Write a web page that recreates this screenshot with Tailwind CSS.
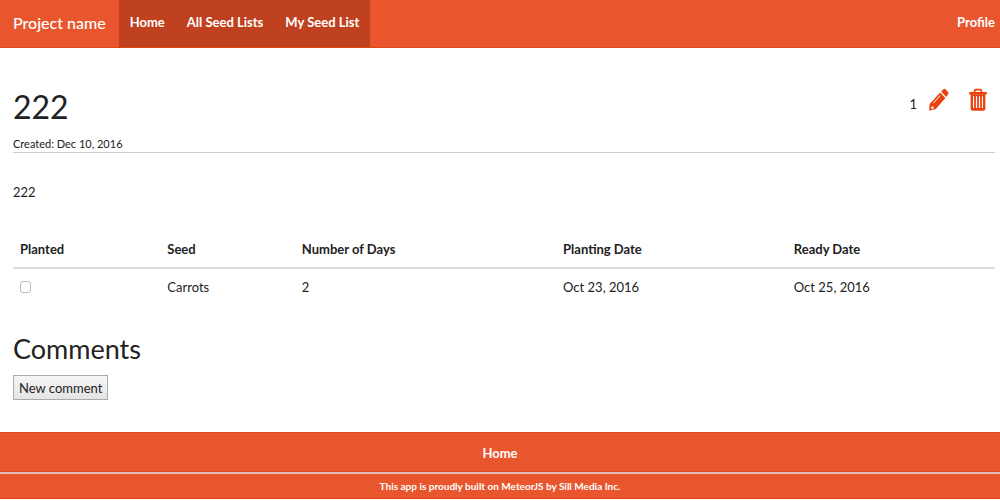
<!DOCTYPE html>
<html lang="en">
<head>
<meta charset="utf-8">
<meta name="viewport" content="width=device-width, initial-scale=1">
<title>Seed List</title>
<script src="https://cdn.jsdelivr.net/npm/@tailwindcss/browser@4"></script>
</head>
<body class="bg-white font-['Lato','Noto_Sans',sans-serif] text-[13px] text-[#222]">
<nav class="flex h-12 items-stretch justify-between border-b border-[#dd4814] bg-[#e9562d] font-bold text-white">
  <div class="flex">
    <a href="#" class="flex items-center px-[13px] pb-[2px] text-base font-medium">Project name</a>
    <div class="flex bg-[#bf4120]">
      <a href="#" class="flex items-center px-[11px] pb-[2px]">Home</a>
      <a href="#" class="flex items-center px-[11px] pb-[2px]">All Seed Lists</a>
      <a href="#" class="flex items-center px-[11px] pb-[2px]">My Seed List</a>
    </div>
  </div>
  <a href="#" class="flex items-center pb-[2px] pr-[5px]">Profile</a>
</nav>
<main class="pl-[13px] pr-[5px] pt-9">
  <header class="flex items-start justify-between border-b border-[#ccc]">
    <div>
      <h1 class="text-[32px] leading-[46px]">222</h1>
      <p class="pt-[5px] text-[11px] leading-[17px]">Created: Dec 10, 2016</p>
    </div>
    <div class="flex items-center gap-3 pr-2 pt-1 text-[#e8420f]">
      <span class="pt-2 text-[13px] leading-4 text-[#222]">1</span>
      <button type="button" aria-label="Edit" class="cursor-pointer">
        <svg class="h-6 w-5" viewBox="0 0 20 24" fill="currentColor" aria-hidden="true">
          <path d="M12.2 3.4 14.4 1.2Q15.6.4 16.8 1.4L19 4Q20 5.4 19 6.6L17.2 9Z"/>
          <path fill-rule="evenodd" d="M11.2 4.4 16.4 10.1 6.8 21.1.3 22.8.6 16ZM2.5 18.5 2.1 21.1 4.8 20.4 4.7 18.7ZM11 7.2 4 15.1 4.5 15.6 11.5 7.7Z"/>
        </svg>
      </button>
      <button type="button" aria-label="Delete" class="ml-2 cursor-pointer">
        <svg class="h-6 w-[18px]" viewBox="0 0 18 24" fill="currentColor" aria-hidden="true">
          <path fill-rule="evenodd" d="M4.8 4V2.8Q5 .8 6.7.8H11.3Q13 .8 13.2 2.8V4H17Q17.8 4 17.8 4.8V6.4H.2V4.8Q.2 4 1 4ZM6.5 4H11.5V2.4H6.5Z"/>
          <path fill-rule="evenodd" d="M1.6 6.2H16.4V20.5Q16.4 22.8 14.2 22.8H3.8Q1.6 22.8 1.6 20.5ZM4 8.3V19.9H5.1V8.3ZM6.9 8.3V19.9H8.1V8.3ZM9.9 8.3V19.9H11.1V8.3ZM12.9 8.3V19.9H14V8.3Z"/>
        </svg>
      </button>
    </div>
  </header>
  <p class="pt-[29px] leading-5">222</p>
  <table class="mt-7 w-full table-fixed text-left leading-5">
    <thead>
      <tr class="border-b-2 border-[#ddd]">
        <th class="w-[15%] px-[7px] pb-2 pt-[9px] font-bold">Planted</th>
        <th class="w-[13.7%] px-[7px] pb-2 pt-[9px] font-bold">Seed</th>
        <th class="w-[26.6%] px-[7px] pb-2 pt-[9px] font-bold">Number of Days</th>
        <th class="w-[23.5%] px-[7px] pb-2 pt-[9px] font-bold">Planting Date</th>
        <th class="px-[7px] pb-2 pt-[9px] font-bold">Ready Date</th>
      </tr>
    </thead>
    <tbody>
      <tr>
        <td class="px-[7px] py-2"><input type="checkbox" aria-label="Carrots planted" class="block h-3 w-[11px] appearance-none rounded-[3px] border border-[#bbb] bg-white"></td>
        <td class="px-[7px] py-2">Carrots</td>
        <td class="px-[7px] py-2">2</td>
        <td class="px-[7px] py-2">Oct 23, 2016</td>
        <td class="px-[7px] py-2">Oct 25, 2016</td>
      </tr>
    </tbody>
  </table>
  <h2 class="pt-6 text-[27px] leading-10">Comments</h2>
  <button type="button" class="mt-[6px] block h-[25px] cursor-pointer border border-[#aaa] bg-linear-to-b from-[#f6f6f6] to-[#e4e4e4] px-[5px] leading-5">New comment</button>
</main>
<footer class="mt-8 bg-[#e9562d] text-center font-bold text-white">
  <div class="border-y border-[#dd4814] pb-[8px] pt-[10px] leading-5"><a href="#">Home</a></div>
  <p class="border-b border-t-2 border-b-[#dd4814] border-t-[#e0bdb5] py-1 text-[10px] leading-4">This app is proudly built on MeteorJS by Sill Media Inc.</p>
</footer>
</body>
</html>
